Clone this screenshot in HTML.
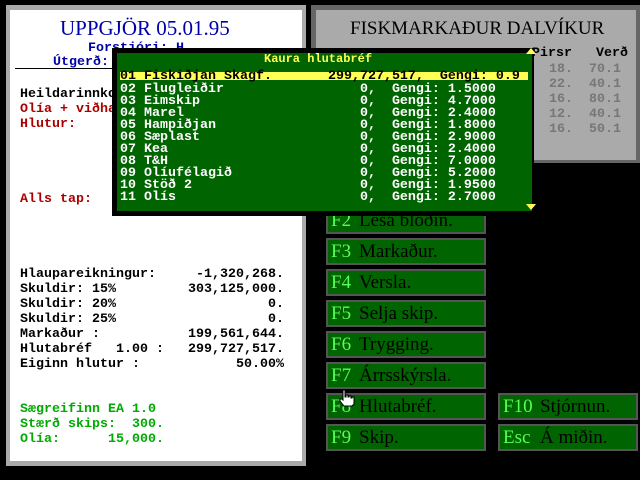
<!DOCTYPE html>
<html><head><meta charset="utf-8"><style>
*{margin:0;padding:0;box-sizing:border-box}
body{width:640px;height:480px;background:#000;position:relative;overflow:hidden;font-family:"Liberation Mono",monospace;font-weight:bold;font-size:13.33px}
.a{position:absolute;white-space:pre;line-height:14px}
.s{font-family:"Liberation Serif",serif;font-weight:normal}
.btn{position:absolute;background:#006400;border:2px solid #555;width:160px;height:27px}
.btn span{position:absolute;top:2px;font-family:"Liberation Serif",serif;font-weight:normal;font-size:19px;line-height:20px;white-space:pre}
.k{left:3px;color:#55ff55}
.l{left:31px;color:#000}
</style></head><body>
<div style="position:absolute;left:6px;top:5px;width:300px;height:461px;background:#aaa"></div>
<div style="position:absolute;left:10px;top:10px;width:292px;height:451px;background:#fff"></div>
<div class="a s" style="left:60px;top:16px;color:#0000aa;font-size:21px;line-height:24px">UPPGJÖR 05.01.95</div>
<div class="a" style="left:88px;top:42px;color:#0000aa">Forstjóri: H</div>
<div class="a" style="left:53px;top:56px;color:#0000aa">Útgerð:</div>
<div style="position:absolute;left:15px;top:68px;width:100px;height:1px;background:#000"></div>
<div class="a" style="left:20px;top:88px;color:#000">Heildarinnko</div>
<div class="a" style="left:20px;top:103px;color:#aa0000">Olía + viðha</div>
<div class="a" style="left:20px;top:118px;color:#aa0000">Hlutur:</div>
<div class="a" style="left:20px;top:193px;color:#aa0000">Alls tap:</div>
<div class="a" style="left:20px;top:268px;color:#000">Hlaupareikningur:</div>
<div class="a" style="left:20px;top:283px;color:#000">Skuldir: 15%</div>
<div class="a" style="left:20px;top:298px;color:#000">Skuldir: 20%</div>
<div class="a" style="left:20px;top:313px;color:#000">Skuldir: 25%</div>
<div class="a" style="left:20px;top:328px;color:#000">Markaður :</div>
<div class="a" style="left:20px;top:343px;color:#000">Hlutabréf   1.00 :</div>
<div class="a" style="left:20px;top:358px;color:#000">Eiginn hlutur :</div>
<div class="a" style="right:356px;top:268px;color:#000">-1,320,268.</div>
<div class="a" style="right:356px;top:283px;color:#000">303,125,000.</div>
<div class="a" style="right:356px;top:298px;color:#000">0.</div>
<div class="a" style="right:356px;top:313px;color:#000">0.</div>
<div class="a" style="right:356px;top:328px;color:#000">199,561,644.</div>
<div class="a" style="right:356px;top:343px;color:#000">299,727,517.</div>
<div class="a" style="right:356px;top:358px;color:#000">50.00%</div>
<div class="a" style="left:20px;top:403px;color:#00aa00">Sægreifinn EA 1.0</div>
<div class="a" style="left:20px;top:418px;color:#00aa00">Stærð skips:  300.</div>
<div class="a" style="left:20px;top:433px;color:#00aa00">Olía:      15,000.</div>
<div style="position:absolute;left:311px;top:5px;width:329px;height:158px;background:#666"></div>
<div style="position:absolute;left:316px;top:10px;width:320px;height:150px;background:#aaa"></div>
<div class="a s" style="left:350px;top:17px;color:#000;font-size:19px;line-height:24px">FISKMARKAÐUR DALVÍKUR</div>
<div class="a" style="left:532px;top:47px;color:#000">Pirsr   Verð</div>
<div class="a" style="left:549px;top:62px;color:#777;line-height:15px">18.  70.1
22.  40.1
16.  80.1
12.  40.1
16.  50.1</div>
<div class="btn" style="left:326px;top:207px"><span class="k">F2</span><span class="l">Lesa blöðin.</span></div>
<div class="btn" style="left:326px;top:238px"><span class="k">F3</span><span class="l">Markaður.</span></div>
<div class="btn" style="left:326px;top:269px"><span class="k">F4</span><span class="l">Versla.</span></div>
<div class="btn" style="left:326px;top:300px"><span class="k">F5</span><span class="l">Selja skip.</span></div>
<div class="btn" style="left:326px;top:331px"><span class="k">F6</span><span class="l">Trygging.</span></div>
<div class="btn" style="left:326px;top:362px"><span class="k">F7</span><span class="l">Árrsskýrsla.</span></div>
<div class="btn" style="left:326px;top:393px"><span class="k">F8</span><span class="l">Hlutabréf.</span></div>
<div class="btn" style="left:326px;top:424px"><span class="k">F9</span><span class="l">Skip.</span></div>
<div class="btn" style="left:498px;top:393px;width:140px"><span class="k">F10</span><span class="l" style="left:40px">Stjórnun.</span></div>
<div class="btn" style="left:498px;top:424px;width:140px"><span class="k">Esc</span><span class="l" style="left:40px">Á miðin.</span></div>
<svg style="position:absolute;left:339px;top:389px" width="16" height="18" viewBox="0 0 16 18"><path d="M4 1h2v7h1V6h2v2h1V7h2v2h1V8h2v7l-2 2H5L1 12V10h2l1 1z" fill="#fff" stroke="#000" stroke-width="1"/></svg>
<div style="position:absolute;left:112px;top:48px;width:422px;height:168px;background:#000"></div>
<div style="position:absolute;left:117px;top:53px;width:415px;height:158px;background:#006400"></div>
<div class="a" style="left:264px;top:52px;color:#ffff55;font-size:12px">Kaura hlutabréf</div>
<div style="position:absolute;left:120px;top:72px;width:408px;height:8px;background:#ffff55"></div>
<div class="a" style="left:120px;top:70px;color:#000">01 Fiskiðjan Skagf.       299,727,517,  Gengi: 0.9</div>
<div class="a" style="left:120px;top:84px;color:#fff;line-height:12px">02 Flugleiðir                 0,  Gengi: 1.5000
03 Eimskip                    0,  Gengi: 4.7000
04 Marel                      0,  Gengi: 2.4000
05 Hampiðjan                  0,  Gengi: 1.8000
06 Sæplast                    0,  Gengi: 2.9000
07 Kea                        0,  Gengi: 2.4000
08 T&amp;H                        0,  Gengi: 7.0000
09 Olíufélagið                0,  Gengi: 5.2000
10 Stöð 2                     0,  Gengi: 1.9500
11 Olís                       0,  Gengi: 2.7000</div>
<svg style="position:absolute;left:526px;top:48px" width="10" height="6"><path d="M5 0L10 6H0z" fill="#ffff55"/></svg>
<svg style="position:absolute;left:526px;top:204px" width="10" height="6"><path d="M0 0H10L5 6z" fill="#ffff55"/></svg>
</body></html>
